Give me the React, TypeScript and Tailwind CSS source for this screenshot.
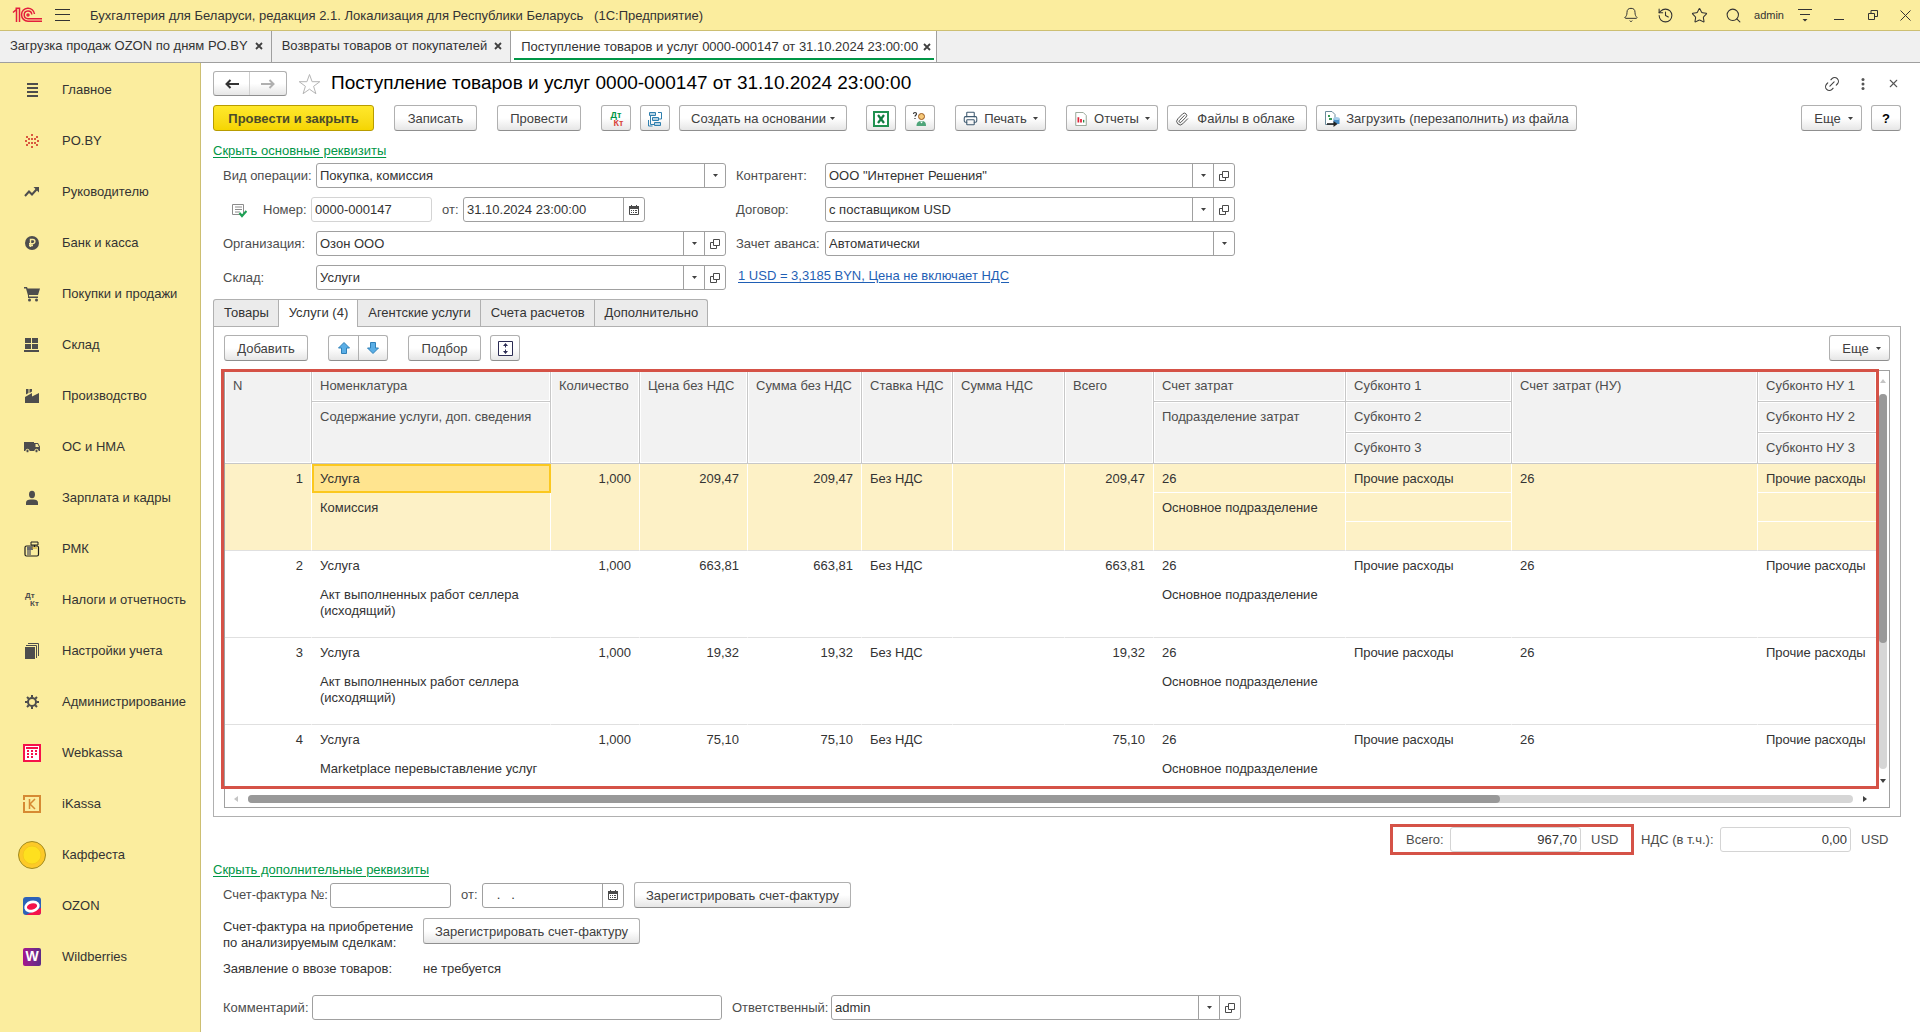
import type { ReactNode } from 'react'
import {
  Bell, History, Star, Search, Link2, X, Paperclip, Printer,
} from 'lucide-react'

type IconProps = { children: ReactNode; size?: number; box?: string }

const Svg = ({ children, size = 16, box = '0 0 16 16' }: IconProps) => (
  <svg width={size} height={size} viewBox={box} fill="none" className="shrink-0">
    {children}
  </svg>
)

const DtKt = ({ dt, kt, size = 'text-[8px] leading-[8px]' }: { dt: string; kt: string; size?: string }) => (
  <span className={`flex flex-col font-bold ${size}`}>
    <span className={dt}>Дт</span>
    <span className={`pl-[5px] ${kt}`}>Кт</span>
  </span>
)

const Caret = () => (
  <svg width="5" height="3" viewBox="0 0 5 3" className="shrink-0">
    <path d="M0 0h5L2.5 3z" fill="#404040" />
  </svg>
)

const OpenIcon = () => (
  <svg width="10" height="10" viewBox="0 0 10 10" fill="none" stroke="#4a4a4a">
    <path d="M3.5.5h6v6h-6zM3 3.5H.5v6h6V7" />
  </svg>
)

const CalendarIcon = () => (
  <svg width="10" height="10" viewBox="0 0 10 10" fill="none">
    <path d="M.5 1.5h9v8h-9z" stroke="#4a4a4a" />
    <path d="M0 1h10v3H0zM2 0h1v2H2zM7 0h1v2H7zM2 5h1v1H2zM4 5h1v1H4zM6 5h2v1H6zM2 7h1v1H2zM4 7h1v1H4zM6 7h2v1H6z" fill="#4a4a4a" />
  </svg>
)

const sections: { label: string; icon: ReactNode }[] = [
  {
    label: 'Главное',
    icon: <Svg><path d="M3 2h11M3 6h11M3 10h11M3 14h11" stroke="#4d4d4d" strokeWidth="2" /></Svg>,
  },
  {
    label: 'PO.BY',
    icon: (
      <Svg>
        <path
          d="M7 1h2v2H7zM7 5h2v2H7zM7 9h2v2H7zM7 13h2v2H7zM2 3h2v2H2zM12 3h2v2h-2zM4 5h2v2H4zM10 5h2v2h-2zM1 7h2v2H1zM13 7h2v2h-2zM4 9h2v2H4zM10 9h2v2h-2zM2 11h2v2H2zM12 11h2v2h-2z"
          fill="#d9583f"
        />
      </Svg>
    ),
  },
  {
    label: 'Руководителю',
    icon: <Svg><path d="M1 12l4-4.5 3 3 4.5-5" stroke="#4d4d4d" strokeWidth="2" /><path d="M9.500 3H15v5.500z" fill="#4d4d4d" /></Svg>,
  },
  {
    label: 'Банк и касса',
    icon: <Svg><circle cx="8" cy="8" r="7" fill="#4d4d4d" /><path d="M6.500 12V4.500h2.300a2.100 2.100 0 010 4.200H5M5 10.500h4" stroke="#fbed9e" strokeWidth="1.400" /></Svg>,
  },
  {
    label: 'Покупки и продажи',
    icon: <Svg><path d="M0 1h3l.6 1.500H16L14 9H5v1.500h9V12H4V9.500L2 2.500H0z" fill="#4d4d4d" /><circle cx="5.500" cy="14" r="1.500" fill="#4d4d4d" /><circle cx="12.500" cy="14" r="1.500" fill="#4d4d4d" /></Svg>,
  },
  {
    label: 'Склад',
    icon: <Svg><path d="M1 1h6v5H1zM8 1h6v5H8zM1 7h6v5H1zM8 7h6v5H8zM0 13h15v2H0z" fill="#4d4d4d" /></Svg>,
  },
  {
    label: 'Производство',
    icon: <Svg><path d="M1 15V9l7-4v3.500L15 5v10zM2 1h2.500v4L2 6.500zM5.500 1H8v2.500L5.500 5z" fill="#4d4d4d" /></Svg>,
  },
  {
    label: 'ОС и НМА',
    icon: <Svg><path d="M0 3h10v9H0zM10 4h4l2 3.500V12h-6zm1.500 1v3H15l-1.500-3z" fill="#4d4d4d" fillRule="evenodd" /><circle cx="3.500" cy="12" r="1.700" fill="#4d4d4d" stroke="#fbed9e" /><circle cx="12.500" cy="12" r="1.700" fill="#4d4d4d" stroke="#fbed9e" /></Svg>,
  },
  {
    label: 'Зарплата и кадры',
    icon: <Svg><ellipse cx="8" cy="4.500" rx="3" ry="3.700" fill="#4d4d4d" /><path d="M2 15v-2.500C2 10.500 4 9.500 6.500 9.500h3c2.500 0 4.500 1 4.500 3V15z" fill="#4d4d4d" /></Svg>,
  },
  {
    label: 'РМК',
    icon: (
      <Svg>
        <rect x="1" y="5" width="13.500" height="10" rx="1.500" stroke="#1c1c1c" strokeWidth="1.200" />
        <path d="M7 1h7v3H7zM10.500 4v2" stroke="#1c1c1c" />
        <path d="M3 5.500h6V9H3z" fill="#6b6b6b" />
        <path d="M4 9v5M6 9v5" stroke="#6b6b6b" strokeWidth="1.500" />
        <path d="M8 7h5" stroke="#c7a21a" />
      </Svg>
    ),
  },
  { label: 'Налоги и отчетность', icon: <DtKt dt="text-[#4d4d4d]" kt="text-[#4d4d4d]" /> },
  {
    label: 'Настройки учета',
    icon: <Svg><path d="M1 4h10v12H1z" fill="#4d4d4d" /><path d="M2 2.500h10.500V15M4 .5h10.500V13" stroke="#4d4d4d" /></Svg>,
  },
  {
    label: 'Администрирование',
    icon: (
      <Svg>
        <circle cx="8" cy="8" r="4" stroke="#4d4d4d" strokeWidth="2" />
        <path d="M8 1v2.500M8 12.500V15M1 8h2.500M12.500 8H15M3 3l1.800 1.800M11.200 11.200L13 13M3 13l1.800-1.800M11.200 4.800L13 3" stroke="#4d4d4d" strokeWidth="2" />
      </Svg>
    ),
  },
  {
    label: 'Webkassa',
    icon: (
      <Svg size={18} box="0 0 18 18">
        <rect x="1" y="1" width="16" height="16" fill="#fff" stroke="#f5124a" strokeWidth="2" />
        <path d="M3 3h12v2H3zM4 6h2v2H4zM8 6h2v2H8zM12 6h2v2h-2zM4 9h2v2H4zM8 9h2v2H8zM12 9h2v2h-2zM4 12h2v2H4zM8 12h2v2H8z" fill="#f5124a" />
      </Svg>
    ),
  },
  {
    label: 'iKassa',
    icon: (
      <Svg size={18} box="0 0 18 18">
        <path d="M1 4V1h16v16H1v-2" stroke="#d68a33" strokeWidth="2" />
        <path d="M1 7v9M1 4v1" stroke="#d68a33" strokeWidth="2" />
        <path d="M6.500 4v10M12 4L7 9l5 5" stroke="#d68a33" strokeWidth="1.500" />
      </Svg>
    ),
  },
  {
    label: 'Каффеста',
    icon: (
      <Svg size={28} box="0 0 28 28">
        <circle cx="14" cy="14" r="13.500" fill="#fdc928" stroke="#a08a20" />
        <circle cx="14" cy="14" r="9" fill="#fee01f" stroke="#f5ca1c" />
      </Svg>
    ),
  },
  {
    label: 'OZON',
    icon: (
      <Svg size={18} box="0 0 18 18">
        <rect width="18" height="18" rx="3" fill="#2c62b8" />
        <path d="M3 18l15-7v4a3 3 0 01-3 3z" fill="#f5124a" />
        <ellipse cx="9" cy="9.500" rx="6.500" ry="4.500" transform="rotate(-14 9 9.500)" fill="#f5124a" stroke="#fff" strokeWidth="2.600" />
      </Svg>
    ),
  },
  {
    label: 'Wildberries',
    icon: (
      <span className="flex h-[18px] w-[18px] items-center justify-center rounded-[2px] bg-linear-to-r from-[#a5128f] to-[#5c2a86] text-[14px] font-bold text-white">
        W
      </span>
    ),
  },
]

const windows = [
  { title: 'Загрузка продаж OZON по дням PO.BY', active: false },
  { title: 'Возвраты товаров от покупателей', active: false },
  { title: 'Поступление товаров и услуг 0000-000147 от 31.10.2024 23:00:00', active: true },
]

const tabs = ['Товары', 'Услуги (4)', 'Агентские услуги', 'Счета расчетов', 'Дополнительно']

const rows = [
  { n: 1, text: 'Комиссия', price: '209,47' },
  { n: 2, text: 'Акт выполненных работ селлера (исходящий)', price: '663,81' },
  { n: 3, text: 'Акт выполненных работ селлера (исходящий)', price: '19,32' },
  { n: 4, text: 'Marketplace перевыставление услуг', price: '75,10' },
]

const TopBar = () => (
  <header className="flex h-[31px] shrink-0 items-center border-b border-[#cdbf72] bg-[#fbed9e] text-[#333]">
    <svg width="30" height="16" viewBox="0 0 30 16" fill="none" stroke="#e31e3c" strokeWidth="1.500" className="ml-3">
      <path d="M1 5.500l3.500-3V15M3.500 1.200h4V15" />
      <path d="M22.500 7A6.500 6.500 0 1016 14.200h14" />
      <path d="M19.800 7.500a3.800 3.800 0 10-3.800 4.200h14" />
      <circle cx="16" cy="8" r="1" />
    </svg>
    <button type="button" aria-label="Меню" className="ml-[13px]">
      <svg width="15" height="12" viewBox="0 0 15 12" stroke="#333"><path d="M0 .5h15M0 5.500h15M0 11.500h15" /></svg>
    </button>
    <h1 className="ml-5 flex-1 pt-px text-[13px] whitespace-pre">
      Бухгалтерия для Беларуси, редакция 2.1. Локализация для Республики Беларусь   (1С:Предприятие)
    </h1>
    <div className="flex items-center">
      <button type="button" aria-label="Уведомления" className="flex w-[34px] justify-center"><Bell size={16} strokeWidth={1.5} /></button>
      <button type="button" aria-label="История" className="flex w-[34px] justify-center"><History size={17} strokeWidth={1.5} /></button>
      <button type="button" aria-label="Избранное" className="flex w-[34px] justify-center"><Star size={17} strokeWidth={1.5} /></button>
      <button type="button" aria-label="Поиск" className="flex w-[34px] justify-center"><Search size={17} strokeWidth={1.5} /></button>
      <span className="ml-1 text-[11px]">admin</span>
      <button type="button" aria-label="Сервис" className="ml-[14px]">
        <svg width="14" height="14" viewBox="0 0 14 14" stroke="#333"><path d="M0 1.500h14M2 6.500h10" /><path d="M4.500 11h5L7 13.500z" fill="#333" stroke="none" /></svg>
      </button>
      <button type="button" aria-label="Свернуть" className="ml-[22px]">
        <svg width="10" height="14" viewBox="0 0 10 14" stroke="#333"><path d="M0 11.500h10" /></svg>
      </button>
      <button type="button" aria-label="Развернуть" className="ml-6">
        <svg width="10" height="10" viewBox="0 0 10 10" fill="none" stroke="#333"><path d="M.5 3.500h6v6h-6zM3 3V.5h6.500v6H7" /></svg>
      </button>
      <button type="button" aria-label="Закрыть" className="mr-[9px] ml-[22px]">
        <svg width="11" height="11" viewBox="0 0 11 11" stroke="#333"><path d="M.5.5l10 10M10.500.5l-10 10" /></svg>
      </button>
    </div>
  </header>
)

const WindowTabs = () => (
  <nav className="flex h-8 shrink-0 border-b border-[#9f9f9f] bg-[#f0f0f0] text-[13px] text-[#333]">
    {windows.map((w) => (
      <div
        key={w.title}
        className={`flex border-r border-[#9f9f9f] pl-[3px] pr-[2px] ${w.active ? 'bg-white' : ''}`}
      >
        <div className={`flex items-center border-b-2 pl-[7px] ${w.active ? 'mb-[2px] gap-[5px] border-[#009646] pt-1 pr-[3px]' : 'gap-[7px] border-transparent pt-px pr-[6px]'}`}>
          <button type="button" className="whitespace-nowrap">{w.title}</button>
          <button type="button" aria-label={`Закрыть ${w.title}`}>
            <svg width="8" height="8" viewBox="0 0 8 8" stroke="#404040" strokeWidth="1.800"><path d="M1 1l6 6M7 1L1 7" /></svg>
          </button>
        </div>
      </div>
    ))}
  </nav>
)

const Sidebar = () => (
  <aside className="w-[201px] shrink-0 border-r border-[#cdbf72] bg-[#fbed9e]">
    <ul>
      {sections.map((s) => (
        <li key={s.label}>
          <a href="#" className="flex h-[51px] items-center pt-[2px] text-[13px] text-[#333]">
            <span className="flex w-[62px] justify-center pl-[2px]">{s.icon}</span>
            <span className="whitespace-nowrap">{s.label}</span>
          </a>
        </li>
      ))}
    </ul>
  </aside>
)

const Button = ({ children, className = 'px-[13px]', label }: { children: ReactNode; className?: string; label?: string }) => (
  <button
    type="button"
    aria-label={label}
    className={`flex h-[26px] shrink-0 items-center justify-center rounded-[3px] border border-[#b0b0b0] border-b-[#8f8f8f] bg-linear-to-b from-white from-50% to-[#e6e6e6] pt-px text-[13px] whitespace-nowrap text-[#404040] ${className}`}
  >
    {children}
  </button>
)

const inputFrame = 'flex h-[25px] rounded-[3px] border border-[#a0a0a0] bg-white text-[13px] text-[#333]'

type SelectProps = { id: string; label: string; labelWidth: string; width: string; value: string; open?: boolean }

const SelectField = ({ id, label, labelWidth, width, value, open }: SelectProps) => (
  <div className="flex items-center">
    <label htmlFor={id} className={`shrink-0 whitespace-nowrap ${labelWidth}`}>{label}</label>
    <div className={`${inputFrame} ${width}`}>
      <div className="relative flex-1">
        <select id={id} defaultValue={value} className="h-full w-full appearance-none pl-[3px] outline-none">
          <option>{value}</option>
        </select>
        <span className="pointer-events-none absolute inset-y-0 right-0 flex w-[21px] items-center justify-center border-l border-[#a0a0a0]">
          <Caret />
        </span>
      </div>
      {open && (
        <button type="button" aria-label={`Открыть: ${label}`} className="flex w-[21px] items-center justify-center border-l border-[#a0a0a0]">
          <OpenIcon />
        </button>
      )}
    </div>
  </div>
)

const DateField = ({ id, value, width }: { id: string; value: string; width: string }) => (
  <div className={`${inputFrame} ${width}`}>
    <input id={id} defaultValue={value} className="min-w-0 flex-1 pl-[3px] outline-none" />
    <button type="button" aria-label="Выбрать дату" className="flex w-[21px] items-center justify-center border-l border-[#a0a0a0]">
      <CalendarIcon />
    </button>
  </div>
)

const TitleRow = () => (
  <div className="flex h-[25px] items-center">
    <div className="flex h-[25px] rounded-[3px] border border-[#b0b0b0] border-b-[#8f8f8f] bg-linear-to-b from-white from-50% to-[#e6e6e6]">
      <button type="button" aria-label="Назад" className="flex w-9 items-center justify-center border-r border-[#d0d0d0]">
        <svg width="14" height="10" viewBox="0 0 14 10" fill="none" stroke="#333" strokeWidth="2"><path d="M1 5h13M5.500 1L1.500 5l4 4" /></svg>
      </button>
      <button type="button" aria-label="Вперед" className="flex w-9 items-center justify-center">
        <svg width="14" height="10" viewBox="0 0 14 10" fill="none" stroke="#b0b0b0" strokeWidth="2"><path d="M0 5h13M8.500 1l4 4-4 4" /></svg>
      </button>
    </div>
    <button type="button" aria-label="В избранное" className="ml-[11px]">
      <svg width="23" height="22" viewBox="0 0 23 22" fill="none" stroke="#b4b4b4"><path d="M11.500 1.500l2.600 7.200h7.700l-6.200 4.600 2.300 7.400-6.400-4.500-6.400 4.500 2.300-7.400L1.200 8.700h7.700z" /></svg>
    </button>
    <h2 className="ml-[10px] flex-1 text-[19px] text-black">Поступление товаров и услуг 0000-000147 от 31.10.2024 23:00:00</h2>
    <button type="button" aria-label="Ссылка" className="text-[#444]"><Link2 size={18} strokeWidth={1.5} className="-rotate-45" /></button>
    <button type="button" aria-label="Дополнительно" className="ml-5">
      <svg width="4" height="12" viewBox="0 0 4 12" fill="#555"><circle cx="2" cy="1.500" r="1.500" /><circle cx="2" cy="6" r="1.500" /><circle cx="2" cy="10.500" r="1.500" /></svg>
    </button>
    <button type="button" aria-label="Закрыть документ" className="mr-px ml-[22px] text-[#555]"><X size={13} /></button>
  </div>
)

const Toolbar = () => (
  <div className="mt-[9px] flex items-center">
    <button type="button" className="h-[26px] w-[161px] rounded-[3px] border border-[#b89c00] bg-linear-to-b from-[#ffe82a] to-[#f5d500] pt-px text-[13px] font-bold text-[#4a4a2a]">
      Провести и закрыть
    </button>
    <Button className="ml-5 w-[83px]">Записать</Button>
    <Button className="ml-5 w-[84px]">Провести</Button>
    <Button className="ml-5 w-[30px]" label="Дт/Кт"><DtKt dt="text-[#009646]" kt="text-[#d9443a]" size="text-[9px] leading-[8px]" /></Button>
    <Button className="ml-[9px] w-[30px]" label="Структура подчиненности">
      <Svg>
        <path d="M2.500 1.500h6v3h-6zM5.500 6.500h6v3h-6zM7.500 11.500h6v3h-6z" fill="#b5d3e6" stroke="#2f7fae" />
        <path d="M11 1.500h3.500V8H12M3.500 5v8.500H7M1.500 9v6h4" stroke="#2f7fae" />
      </Svg>
    </Button>
    <Button className="ml-[9px] w-[168px] gap-1">Создать на основании<Caret /></Button>
    <Button className="ml-[19px] w-[30px]" label="Excel">
      <Svg>
        <path d="M1 1h14v14H1z" fill="#fff" stroke="#1f9150" strokeWidth="2" />
        <path d="M5 4l6 8M11 4l-6 8" stroke="#107c41" strokeWidth="2.200" />
      </Svg>
    </Button>
    <Button className="ml-[9px] w-[30px]" label="Справка по контрагенту">
      <Svg>
        <path d="M1.500 3c0-2 3-2 3 0 0 1.200-1.500 1.200-1.500 2.500M3 7v1" stroke="#333" strokeWidth="1.200" />
        <circle cx="9.500" cy="5.500" r="3" fill="#f6c878" stroke="#9a5a20" />
        <path d="M4.500 15c0-3.500 1.500-5 5-5s4.500 1.500 4.500 5z" fill="#4fa57a" />
        <path d="M8 10.500l1.500 2 1.500-2z" fill="#fff" />
      </Svg>
    </Button>
    <Button className="ml-5 w-[91px] gap-[6px]"><Printer size={15} strokeWidth={1.7} className="text-[#3f5a70]" />Печать<Caret /></Button>
    <Button className="ml-5 w-[92px] gap-[6px]">
      <Svg size={14}>
        <path d="M2 .5h8.500L14 4v11.500H2z" fill="#fff" stroke="#8a9a8a" />
        <path d="M5 12V6M8 12V8" stroke="#e0243a" strokeWidth="2" /><path d="M11 12V9" stroke="#2a8a4a" strokeWidth="1.500" />
      </Svg>
      Отчеты<Caret />
    </Button>
    <Button className="ml-[9px] w-[140px] gap-2 pr-1"><Paperclip size={14} strokeWidth={1.5} />Файлы в облаке</Button>
    <Button className="ml-[9px] w-[261px] gap-[6px]">
      <Svg>
        <path d="M1.500.5H8L11 3.500v10H1.500z" fill="#fff" stroke="#6a8a9a" />
        <path d="M4 4h2v2H4zM5 7h3v2H5z" fill="#3a9a5a" />
        <path d="M9.500 7.500h6v5.500h-6z" fill="#4a8ec6" />
        <ellipse cx="12.500" cy="7.500" rx="3" ry="1.500" fill="#a5cdeb" />
        <path d="M3 13h8" stroke="#222" strokeWidth="1.600" /><path d="M9.500 10l4 3-4 3z" fill="#222" />
      </Svg>
      Загрузить (перезаполнить) из файла
    </Button>
    <Button className="ml-auto w-[61px] gap-[7px] pl-1">Еще<Caret /></Button>
    <Button className="ml-[9px] w-[30px] font-bold text-black">?</Button>
  </div>
)

const DocumentFields = () => (
  <section className="mt-1 flex gap-[10px] pl-[10px] text-[13px] text-[#4d4d4d]">
    <div className="flex flex-col gap-[9px]">
      <SelectField id="operation" label="Вид операции:" labelWidth="w-[93px]" width="w-[410px]" value="Покупка, комиссия" />
      <div className="flex items-center">
        <span className="flex w-10 justify-center pr-2">
          <Svg>
            <path d="M1.500 2.500h11v10h-11zM4 5h7M4 7.500h7M4 10h5" stroke="#8c8c8c" />
            <path d="M8.500 11l2.500 3 4.500-5" stroke="#1fa055" strokeWidth="2.200" />
          </Svg>
        </span>
        <label htmlFor="number" className="w-12">Номер:</label>
        <input id="number" defaultValue="0000-000147" className="h-[25px] w-[121px] rounded-[3px] border border-[#d4d4d4] pl-[3px] text-[#333] outline-none" />
        <label htmlFor="date" className="ml-[10px] w-[21px]">от:</label>
        <DateField id="date" value="31.10.2024 23:00:00" width="w-[182px]" />
      </div>
      <SelectField id="organization" label="Организация:" labelWidth="w-[93px]" width="w-[410px]" value="Озон ООО" open />
      <SelectField id="warehouse" label="Склад:" labelWidth="w-[93px]" width="w-[410px]" value="Услуги" open />
    </div>
    <div className="flex flex-col gap-[9px]">
      <SelectField id="contractor" label="Контрагент:" labelWidth="w-[89px]" width="w-[410px]" value={'ООО "Интернет Решения"'} open />
      <SelectField id="contract" label="Договор:" labelWidth="w-[89px]" width="w-[410px]" value="с поставщиком USD" open />
      <SelectField id="advance" label="Зачет аванса:" labelWidth="w-[89px]" width="w-[410px]" value="Автоматически" />
      <a href="#" className="pt-[3px] pl-[2px] leading-4 text-[#1f5fb5] underline underline-offset-2">
        1 USD = 3,3185 BYN, Цена не включает НДС
      </a>
    </div>
  </section>
)

const th = 'border-r border-b border-[#c8c8c8] px-2 pt-[7px] text-left align-top leading-4 font-normal whitespace-nowrap text-[#4d4d4d] bg-[#f2f2f2] shadow-[inset_1px_1px_0_#fff,inset_-1px_-1px_0_#fff]'

const ServicesTable = () => (
  <table className="w-full table-fixed border-separate border-spacing-0 text-[13px] text-[#333]">
    <colgroup>
      <col className="w-[87px]" />
      <col className="w-[239px]" />
      <col className="w-[89px]" />
      <col className="w-[108px]" />
      <col className="w-[114px]" />
      <col className="w-[91px]" />
      <col className="w-[112px]" />
      <col className="w-[89px]" />
      <col className="w-[192px]" />
      <col className="w-[166px]" />
      <col className="w-[246px]" />
      <col />
    </colgroup>
    <thead>
      <tr className="h-[31px]">
        <th rowSpan={3} className={th}>N</th>
        <th className={th}>Номенклатура</th>
        <th rowSpan={3} className={th}>Количество</th>
        <th rowSpan={3} className={th}>Цена без НДС</th>
        <th rowSpan={3} className={th}>Сумма без НДС</th>
        <th rowSpan={3} className={th}>Ставка НДС</th>
        <th rowSpan={3} className={th}>Сумма НДС</th>
        <th rowSpan={3} className={th}>Всего</th>
        <th className={th}>Счет затрат</th>
        <th className={th}>Субконто 1</th>
        <th rowSpan={3} className={th}>Счет затрат (НУ)</th>
        <th className={th}>Субконто НУ 1</th>
      </tr>
      <tr className="h-[31px]">
        <th rowSpan={2} className={th}>Содержание услуги, доп. сведения</th>
        <th rowSpan={2} className={th}>Подразделение затрат</th>
        <th className={th}>Субконто 2</th>
        <th className={th}>Субконто НУ 2</th>
      </tr>
      <tr className="h-[31px]">
        <th className={th}>Субконто 3</th>
        <th className={th}>Субконто НУ 3</th>
      </tr>
    </thead>
    {rows.map((row) => {
      const selected = row.n === 1
      const cell = `border-r border-white px-2 pt-[7px] align-top leading-4 ${selected ? 'bg-[#fdf1c6]' : ''}`
      const inner = `${cell} border-b`
      const last = `${cell} border-b border-b-[#e0e0e0]`
      return (
        <tbody key={row.n}>
          <tr className="h-[29px]">
            <td rowSpan={3} className={`${last} text-right`}>{row.n}</td>
            <td className={selected ? 'border-2 border-[#fbc81f] bg-[#ffe48f] px-[6px] leading-4' : inner}>Услуга</td>
            <td rowSpan={3} className={`${last} text-right`}>1,000</td>
            <td rowSpan={3} className={`${last} text-right`}>{row.price}</td>
            <td rowSpan={3} className={`${last} text-right`}>{row.price}</td>
            <td rowSpan={3} className={last}>Без НДС</td>
            <td rowSpan={3} className={last} />
            <td rowSpan={3} className={`${last} text-right`}>{row.price}</td>
            <td className={inner}>26</td>
            <td className={inner}>Прочие расходы</td>
            <td rowSpan={3} className={last}>26</td>
            <td className={`${inner} whitespace-nowrap`}>Прочие расходы</td>
          </tr>
          <tr className="h-[29px]">
            <td rowSpan={2} className={last}>{row.text}</td>
            <td rowSpan={2} className={last}>Основное подразделение</td>
            <td className={inner} />
            <td className={inner} />
          </tr>
          <tr className="h-[29px]">
            <td className={last} />
            <td className={last} />
          </tr>
        </tbody>
      )
    })}
  </table>
)

const TabPanel = () => (
  <section className="flex min-h-0 flex-1 flex-col border border-[#b0b0b0] px-[10px] pt-2 pb-2">
    <div className="flex items-center">
      <Button className="w-[84px]">Добавить</Button>
      <div className="ml-5 flex h-[26px] rounded-[3px] border border-[#b0b0b0] border-b-[#8f8f8f] bg-linear-to-b from-white from-50% to-[#e6e6e6]">
        <button type="button" aria-label="Вверх" className="flex w-[30px] items-center justify-center border-r border-[#b0b0b0]">
          <svg width="12" height="12" viewBox="0 0 12 12"><path d="M6 .5l5.500 5.500H8.500v5.500h-5V6H.5z" fill="#5aaee6" stroke="#2f80b8" /></svg>
        </button>
        <button type="button" aria-label="Вниз" className="flex w-7 items-center justify-center">
          <svg width="12" height="12" viewBox="0 0 12 12"><path d="M6 11.500L.5 6h3V.5h5V6h3z" fill="#5aaee6" stroke="#2f80b8" /></svg>
        </button>
      </div>
      <Button className="ml-5 w-[73px]">Подбор</Button>
      <Button className="ml-[9px] w-[30px]" label="Развернуть строки">
        <svg width="15" height="15" viewBox="0 0 15 15" fill="none">
          <path d="M.5.5h14v14H.5z" fill="#fff" stroke="#2c2c54" />
          <path d="M7.500 3v3.500M7.500 8.500V12" stroke="#2c2c54" /><path d="M5 5l2.500-3L10 5zM5 10l2.500 3L10 10z" fill="#2c2c54" />
        </svg>
      </Button>
      <Button className="ml-auto w-[61px] gap-[7px] pl-1">Еще<Caret /></Button>
    </div>

    <div className="relative mt-[9px] flex min-h-0 flex-1 flex-col border border-[#a0a0a0]">
      <div className="flex min-h-0 flex-1">
        <div className="min-w-0 flex-1 overflow-hidden">
          <ServicesTable />
        </div>
        {/* vertical scrollbar */}
        <div className="flex w-3 flex-col items-center">
          <svg width="6" height="4" viewBox="0 0 6 4" className="mt-2"><path d="M0 4l3-4 3 4z" fill="#c4c4c4" /></svg>
          <div className="mt-[11px] flex-1 rounded-full bg-[#d6d6d6]">
            <div className="h-[249px] w-2 rounded-full bg-[#999]" />
          </div>
          <svg width="6" height="4" viewBox="0 0 6 4" className="mt-[10px] mb-1"><path d="M0 0l3 4 3-4z" fill="#404040" /></svg>
        </div>
      </div>
      {/* horizontal scrollbar */}
      <div className="flex h-5 items-center pt-1 pr-[22px] pl-[9px]">
        <svg width="4" height="6" viewBox="0 0 4 6"><path d="M4 0L0 3l4 3z" fill="#c4c4c4" /></svg>
        <div className="mx-[10px] flex-1 rounded-full bg-[#d6d6d6]">
          <div className="h-2 w-[78%] rounded-full bg-[#999]" />
        </div>
        <svg width="4" height="6" viewBox="0 0 4 6"><path d="M0 0l4 3-4 3z" fill="#404040" /></svg>
      </div>
      {/* highlight around the list */}
      <div className="pointer-events-none absolute -top-[2px] right-[10px] bottom-[18px] -left-1 border-3 border-[#d55247]" />
    </div>
  </section>
)

const totalInput = 'h-[25px] w-[131px] rounded-[3px] border border-[#d4d4d4] pr-[3px] text-right text-[#333] outline-none'

const Totals = () => (
  <div className="mt-[7px] flex justify-end pr-3 text-[13px] text-[#4d4d4d]">
    <div className="flex items-center border-3 border-[#d55247] pr-3 pl-[13px]">
      <label htmlFor="total" className="w-[44px]">Всего:</label>
      <input id="total" defaultValue="967,70" className={totalInput} />
      <span className="ml-[10px] w-[28px]">USD</span>
    </div>
    <div className="flex items-center pl-[7px]">
      <label htmlFor="vat" className="w-[79px] whitespace-nowrap">НДС (в т.ч.):</label>
      <input id="vat" defaultValue="0,00" className={totalInput} />
      <span className="ml-[10px] w-[28px]">USD</span>
    </div>
  </div>
)

const ExtraFields = () => (
  <section className="mt-1 pl-[10px] text-[13px] text-[#4d4d4d]">
    <div className="flex h-[26px] items-center">
      <label htmlFor="invoice" className="w-[107px]">Счет-фактура №:</label>
      <input id="invoice" className="h-[25px] w-[121px] rounded-[3px] border border-[#a0a0a0] pl-1 outline-none" />
      <label htmlFor="invoice-date" className="ml-[10px] w-[21px]">от:</label>
      <DateField id="invoice-date" value="   .   ." width="w-[142px]" />
      <Button className="ml-[10px] w-[217px]">Зарегистрировать счет-фактуру</Button>
    </div>
    <div className="mt-[10px] flex items-start text-[#333]">
      <p className="w-[200px] pt-px leading-4">Счет-фактура на приобретение<br />по анализируемым сделкам:</p>
      <Button className="w-[217px]">Зарегистрировать счет-фактуру</Button>
    </div>
    <div className="mt-[10px] flex leading-4 text-[#333]">
      <span className="w-[200px]">Заявление о ввозе товаров:</span>
      <span>не требуется</span>
    </div>
    <div className="mt-[18px] flex items-center">
      <label htmlFor="comment" className="w-[89px]">Комментарий:</label>
      <input id="comment" className="mr-[10px] h-[25px] w-[410px] rounded-[3px] border border-[#a0a0a0] pl-1 outline-none" />
      <SelectField id="responsible" label="Ответственный:" labelWidth="w-[99px]" width="w-[410px]" value="admin" open />
    </div>
  </section>
)

const App = () => (
  <div className="flex h-screen flex-col bg-white font-['Liberation_Sans',Arial,sans-serif]">
    <TopBar />
    <WindowTabs />
    <div className="flex min-h-0 flex-1">
      <Sidebar />
      <main className="flex min-w-0 flex-1 flex-col pt-2 pr-[19px] pb-3 pl-3">
        <TitleRow />
        <Toolbar />
        <a href="#" className="mt-3 self-start text-[13px] leading-4 text-[#009646] underline underline-offset-2">Скрыть основные реквизиты</a>
        <DocumentFields />
        <div role="tablist" className="mt-[9px] flex h-[27px] text-[13px] text-[#333]">
          {tabs.map((tab, i) => (
            <button
              key={tab}
              type="button"
              role="tab"
              aria-selected={i === 1}
              className={`border-t border-r border-[#b0b0b0] pr-[9px] pl-[10px] first:rounded-tl-[3px] first:border-l last:rounded-tr-[3px] ${i === 1 ? 'relative -mb-px bg-white pb-px' : 'bg-[#ebebeb]'}`}
            >
              {tab}
            </button>
          ))}
        </div>
        <TabPanel />
        <Totals />
        <a href="#" className="mt-[7px] self-start text-[13px] leading-4 text-[#009646] underline underline-offset-2">Скрыть дополнительные реквизиты</a>
        <ExtraFields />
      </main>
    </div>
  </div>
)

export default App
